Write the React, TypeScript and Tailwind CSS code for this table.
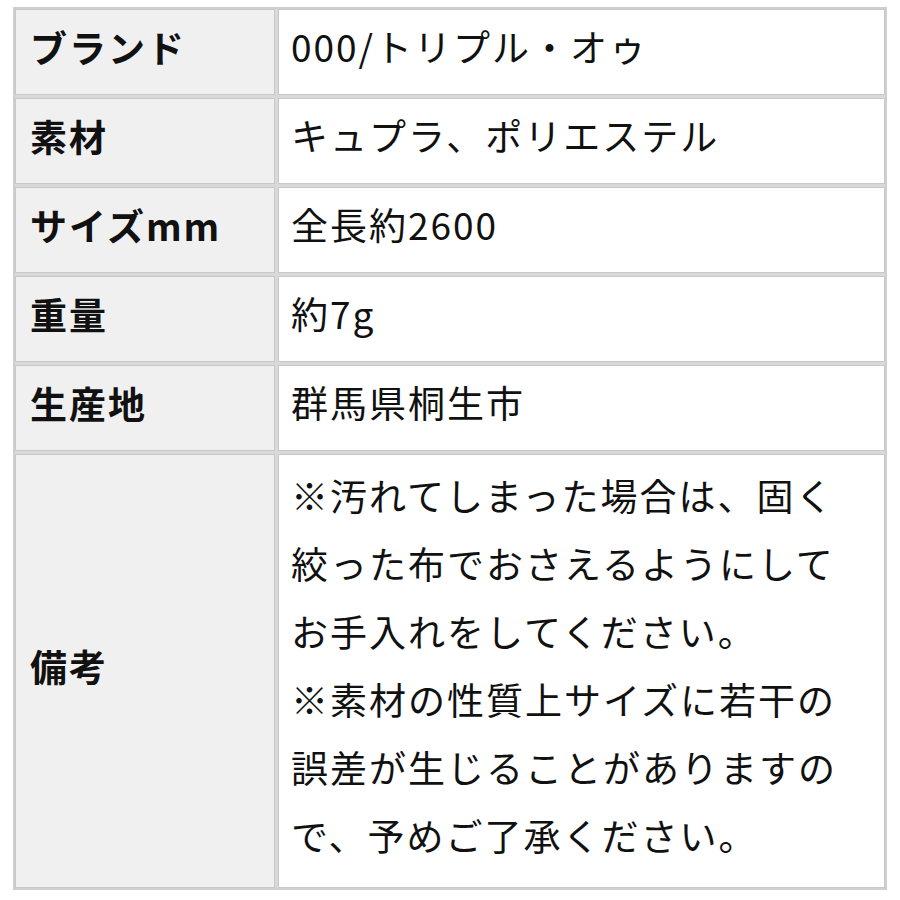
import React from 'react';

const rows: { label: string; value: string[] }[] = [
  { label: 'ブランド', value: ['000/トリプル・オゥ'] },
  { label: '素材', value: ['キュプラ、ポリエステル'] },
  { label: 'サイズmm', value: ['全長約2600'] },
  { label: '重量', value: ['約7g'] },
  { label: '生産地', value: ['群馬県桐生市'] },
  {
    label: '備考',
    value: [
      '※汚れてしまった場合は、固く',
      '絞った布でおさえるようにして',
      'お手入れをしてください。',
      '※素材の性質上サイズに若干の',
      '誤差が生じることがありますの',
      'で、予めご了承ください。',
    ],
  },
];

export default function App() {
  return (
    <div
      className="w-[900px] h-[900px] bg-white overflow-hidden text-[#111]"
      style={{ fontFamily: '"Noto Sans CJK JP", "Noto Sans", sans-serif' }}
    >
      <div className="pt-[7px] pl-[13px]">
        <div className="w-[874px] border-2 border-[#cfcfcf] bg-[#d9d9d9] grid grid-cols-[260px_1fr] gap-[3px]">
          {rows.map((row) => {
            const multi = row.value.length > 1;
            return (
              <React.Fragment key={row.label}>
                <div
                  className={`bg-[#f0f0f0] border border-[#c8c8c8] flex items-center pl-[14px] pb-[9px] ${
                    multi ? 'h-[434px]' : 'h-[86px]'
                  }`}
                >
                  <span className="text-[37px] font-bold leading-none tracking-[2px]">{row.label}</span>
                </div>
                <div
                  className={`bg-white border border-[#c8c8c8] flex flex-col justify-center pl-[12px] pb-[12px] ${
                    multi ? 'h-[434px]' : 'h-[86px]'
                  }`}
                >
                  {row.value.map((line) => (
                    <div
                      key={line}
                      className={`text-[37px] whitespace-nowrap tracking-[2px] ${
                        multi ? 'leading-[68px]' : 'leading-none'
                      }`}
                    >
                      {line}
                    </div>
                  ))}
                </div>
              </React.Fragment>
            );
          })}
        </div>
      </div>
      <div className="mt-[10px] border-t border-[#c8c8c8]" />
    </div>
  );
}
